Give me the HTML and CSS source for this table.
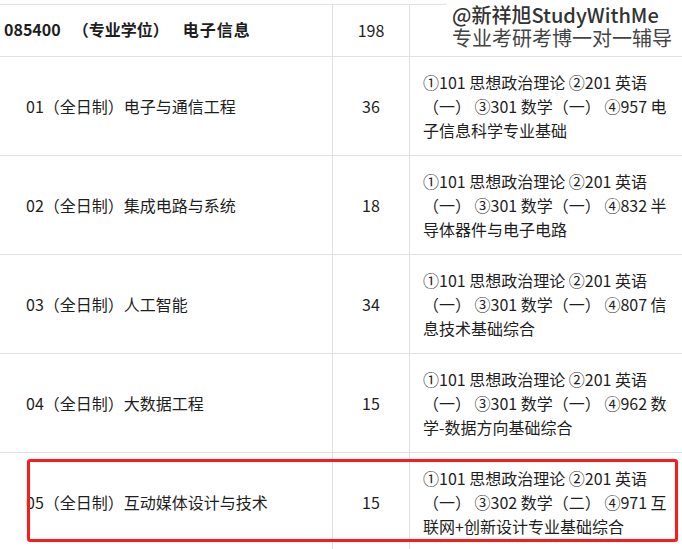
FILE: index.html
```html
<!DOCTYPE html>
<html lang="zh-CN">
<head>
<meta charset="utf-8">
<link rel="stylesheet" href="styles.css">
</head>
<body>
<div class="page">
  <table class="grid">
    <colgroup>
      <col class="c1"><col class="c2"><col class="c3">
    </colgroup>
    <tr class="head">
      <td class="name bold"><span>085400</span><span class="gap">（专业学位）</span><span class="gap wide">电子信息</span></td>
      <td class="num">198</td>
      <td class="exam"></td>
    </tr>
    <tr>
      <td class="name">01（全日制）电子与通信工程</td>
      <td class="num">36</td>
      <td class="exam">①101 思想政治理论 ②201 英语<br>（一） ③301 数学（一） ④957 电<br>子信息科学专业基础</td>
    </tr>
    <tr>
      <td class="name">02（全日制）集成电路与系统</td>
      <td class="num">18</td>
      <td class="exam">①101 思想政治理论 ②201 英语<br>（一） ③301 数学（一） ④832 半<br>导体器件与电子电路</td>
    </tr>
    <tr>
      <td class="name">03（全日制）人工智能</td>
      <td class="num">34</td>
      <td class="exam">①101 思想政治理论 ②201 英语<br>（一） ③301 数学（一） ④807 信<br>息技术基础综合</td>
    </tr>
    <tr>
      <td class="name">04（全日制）大数据工程</td>
      <td class="num">15</td>
      <td class="exam">①101 思想政治理论 ②201 英语<br>（一） ③301 数学（一） ④962 数<br>学-数据方向基础综合</td>
    </tr>
    <tr>
      <td class="name">05（全日制）互动媒体设计与技术</td>
      <td class="num">15</td>
      <td class="exam">①101 思想政治理论 ②201 英语<br>（一） ③302 数学（二） ④971 互<br>联网+创新设计专业基础综合</td>
    </tr>
  </table>
  <div class="mark">
    <div class="mark-top">@新祥旭StudyWithMe</div>
    <div class="mark-sub">专业考研考博一对一辅导</div>
  </div>
  <div class="highlight"></div>
</div>
</body>
</html>
```
FILE: styles.css
```css
html, body {
  margin: 0;
  padding: 0;
  background: #ffffff;
  overflow: hidden;
}
.page {
  position: relative;
  width: 682px;
  height: 549px;
  overflow: hidden;
  font-family: "Noto Sans CJK SC", "Noto Sans", sans-serif;
  color: #1e1e1e;
  font-size: 16px;
}
.grid {
  border-collapse: collapse;
  table-layout: fixed;
  width: 760px;
  margin: 4px 0 0 -1px;
}
.c1 { width: 333px; }
.c2 { width: 77px; }
.c3 { width: 350px; }
.grid td {
  border: 1px solid #dfe1e6;
  padding: 0;
  vertical-align: middle;
  line-height: 24px;
}
.grid tr { height: 99px; }
.grid tr.head { height: 52px; }
.name { padding-left: 26px !important; }
.name.bold {
  padding-left: 4px !important;
  padding-bottom: 3px !important;
  font-weight: bold;
}
.head .num { padding-bottom: 2px; }
.gap { margin-left: 12px; }
.gap.wide { margin-left: 14px; letter-spacing: 1px; }
.num { text-align: center; }
.exam { padding-left: 13px !important; }
.mark {
  position: absolute;
  top: 0;
  left: 446px;
  width: 236px;
  height: 53px;
  background: #ffffff;
  padding-left: 6px;
  box-sizing: border-box;
}
.mark-top {
  font-size: 20px;
  line-height: 23px;
  margin-top: 3px;
  font-weight: 500;
  color: #333333;
}
.mark-sub {
  font-size: 20px;
  line-height: 23px;
  color: #444444;
}
.highlight {
  position: absolute;
  left: 27px;
  top: 459px;
  width: 651px;
  height: 83px;
  border: 3px solid #ff1a1a;
  border-radius: 3px;
  box-sizing: border-box;
}
```
